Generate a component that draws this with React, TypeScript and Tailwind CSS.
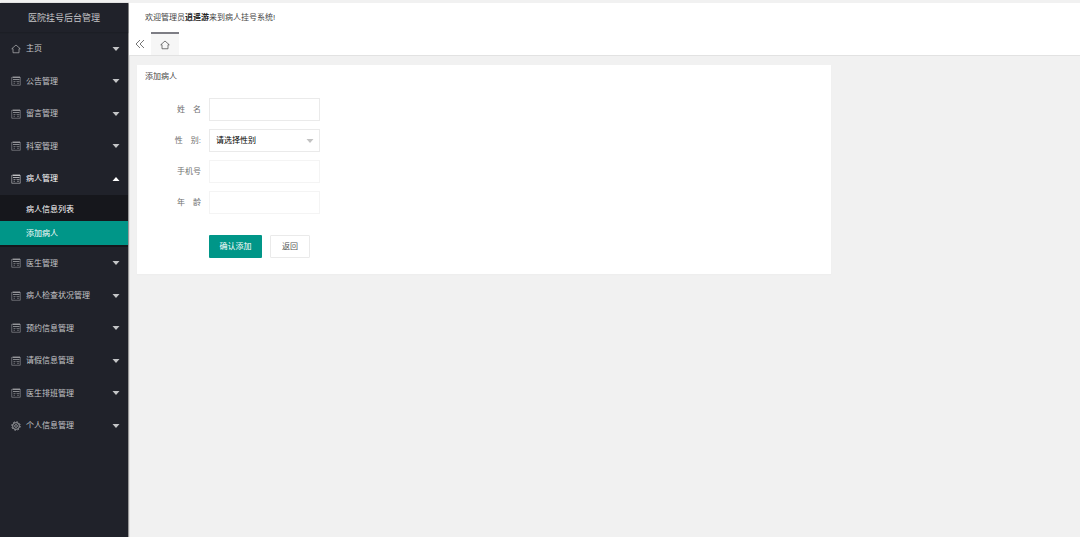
import { useState } from 'react';
import clsx from 'clsx';

type IconName = 'home' | 'list' | 'gear';

type MenuItem = {
	title: string;
	icon: IconName;
	children?: string[];
};

const menu: MenuItem[] = [
	{ title: '主页', icon: 'home' },
	{ title: '公告管理', icon: 'list' },
	{ title: '留言管理', icon: 'list' },
	{ title: '科室管理', icon: 'list' },
	{ title: '病人管理', icon: 'list', children: ['病人信息列表', '添加病人'] },
	{ title: '医生管理', icon: 'list' },
	{ title: '病人检查状况管理', icon: 'list' },
	{ title: '预约信息管理', icon: 'list' },
	{ title: '请假信息管理', icon: 'list' },
	{ title: '医生排班管理', icon: 'list' },
	{ title: '个人信息管理', icon: 'gear' },
];

function HomeIcon({ className }: { className?: string }) {
	return (
		<svg viewBox="0 0 20 20" fill="none" stroke="currentColor" strokeWidth="1.6" className={className}>
			<path d="M1.5 9.5 10 2l8.5 7.5H16v8H4v-8z" />
		</svg>
	);
}

function ListIcon({ className }: { className?: string }) {
	return (
		<svg viewBox="0 0 20 20" fill="none" stroke="currentColor" strokeWidth="1.6" className={className}>
			<path d="M1.5 2v16.5h17V2" strokeOpacity="0.7" />
			<path d="M3 2.5h15" strokeWidth="2.6" />
			<path d="M4 7h13" strokeWidth="2" strokeOpacity="0.8" />
			<path d="M5 11h4M11 11h6M5 14.5h3M12 14.5h4" strokeOpacity="0.7" />
		</svg>
	);
}

function GearIcon({ className }: { className?: string }) {
	return (
		<svg viewBox="0 0 20 20" fill="none" stroke="currentColor" className={className}>
			<circle cx="10" cy="10" r="6.8" strokeWidth="1.8" />
			<circle cx="10" cy="10" r="8.4" strokeWidth="2" strokeDasharray="3.3 3.3" />
			<circle cx="10" cy="10" r="2.8" strokeWidth="1.6" />
		</svg>
	);
}

const icons = { home: HomeIcon, list: ListIcon, gear: GearIcon };

function Caret({ up, className }: { up?: boolean; className?: string }) {
	return (
		<svg viewBox="0 0 8 4" className={className} fill="currentColor">
			<path d={up ? 'M0.5 4 4 0l3.5 4z' : 'M0.5 0h7L4 4z'} />
		</svg>
	);
}

function Sidebar() {
	const [open, setOpen] = useState('病人管理');

	return (
		<aside className="w-32 shrink-0 bg-[#20222a] text-[#c4c5c7] shadow-[1px_0_1px_#999]">
			<h1 className="h-[29px] pt-px text-center text-[9px] leading-[29px] shadow-[0_1px_1px_#1c1e25]">医院挂号后台管理</h1>
			<nav>
				<ul>
					{menu.map((item) => {
						const Icon = icons[item.icon];
						const isOpen = open === item.title && !!item.children;
						return (
							<li key={item.title} className="group">
								<button
									onClick={() => setOpen(isOpen ? '' : item.title)}
									className={clsx(
										'flex h-8 w-full items-center pr-2 pl-[11px] group-odd:h-[33px]',
										isOpen && 'text-white'
									)}
								>
									<Icon className="size-[10px] opacity-80" />
									<span className="ml-[5px] grow pt-px text-left">{item.title}</span>
									<Caret up={isOpen} className="h-1 w-2" />
								</button>
								{isOpen && (
									<ul className="bg-[#16171c] py-[2px] text-white">
										{item.children?.map((child) => (
											<li key={child}>
												<a
													href="#"
													className={clsx('block h-6 pl-[26px] leading-[25px]', child === '添加病人' && 'bg-[#009688]')}
												>
													{child}
												</a>
											</li>
										))}
									</ul>
								)}
							</li>
						);
					})}
				</ul>
			</nav>
		</aside>
	);
}

function Field({ id, label, faint }: { id: string; label: string; faint?: boolean }) {
	return (
		<div className="flex items-center gap-2">
			<label htmlFor={id} className="w-16 text-right text-[#707070]">
				{label}
			</label>
			<input
				id={id}
				type="text"
				className={clsx('h-[23px] w-[111px] border px-[6px]', faint ? 'border-[#f4f4f4]' : 'border-[#eaeaea]')}
			/>
		</div>
	);
}

function PatientForm() {
	return (
		<section className="w-full max-w-[694px] bg-white pb-4 shadow-[0_1px_1px_#eeeeee]">
			<h2 className="h-6 px-2 leading-6 text-[#444]">添加病人</h2>
			<form className="mt-[9px] flex flex-col gap-2" onSubmit={(e) => e.preventDefault()}>
				<Field id="name" label={'姓\u3000名'} />
				<div className="flex items-center gap-2">
					<label htmlFor="sex" className="w-16 text-right text-[#707070]">
						{'性\u3000别:'}
					</label>
					<div className="relative">
						<select
							id="sex"
							className="block h-[23px] w-[111px] appearance-none border border-[#eaeaea] bg-white px-[6px] text-black"
						>
							<option>请选择性别</option>
							<option>男</option>
							<option>女</option>
						</select>
						<Caret className="pointer-events-none absolute top-[10px] right-[6px] h-1 w-2 text-[#c2c2c2]" />
					</div>
				</div>
				<Field id="phone" label="手机号" faint />
				<Field id="age" label={'年\u3000龄'} faint />
				<div className="mt-[13px] ml-[72px] flex gap-2">
					<button type="submit" className="h-[23px] w-[53px] rounded-[1px] bg-[#009688] text-white">
						确认添加
					</button>
					<button type="button" className="h-[23px] w-10 rounded-[1px] border border-[#eaeaea] bg-white text-[#555]">
						返回
					</button>
				</div>
			</form>
		</section>
	);
}

export default function App() {
	return (
		<div className="flex min-h-screen border-t-3 border-[#f1f1f1] bg-[#f1f1f1] font-['Liberation_Sans','Noto_Sans_CJK_SC',sans-serif] text-[8px] leading-3">
			<Sidebar />
			<div className="min-w-0 grow pl-px">
				<header className="h-[29px] bg-white px-4 leading-[29px] text-[#444]">
					欢迎管理员<b className="text-[#222]">逍遥游</b>来到病人挂号系统!
				</header>
				<div className="flex h-6 border-b border-[#e2e2e2] bg-white">
					<button aria-label="收起" className="flex w-[22px] items-center justify-center text-[#666]">
						<svg viewBox="0 0 10 10" fill="none" stroke="currentColor" strokeWidth="0.9" className="size-[10px]">
							<path d="M5 1 1 5l4 4M9 1 5 5l4 4" />
						</svg>
					</button>
					<a href="#" aria-label="主页" className="flex w-7 items-center justify-center border-t-2 border-[#7d7d84] bg-[#f6f6f6] text-[#555]">
						<HomeIcon className="size-[10px]" />
					</a>
				</div>
				<main className="p-2 pt-[9px]">
					<PatientForm />
				</main>
			</div>
		</div>
	);
}
